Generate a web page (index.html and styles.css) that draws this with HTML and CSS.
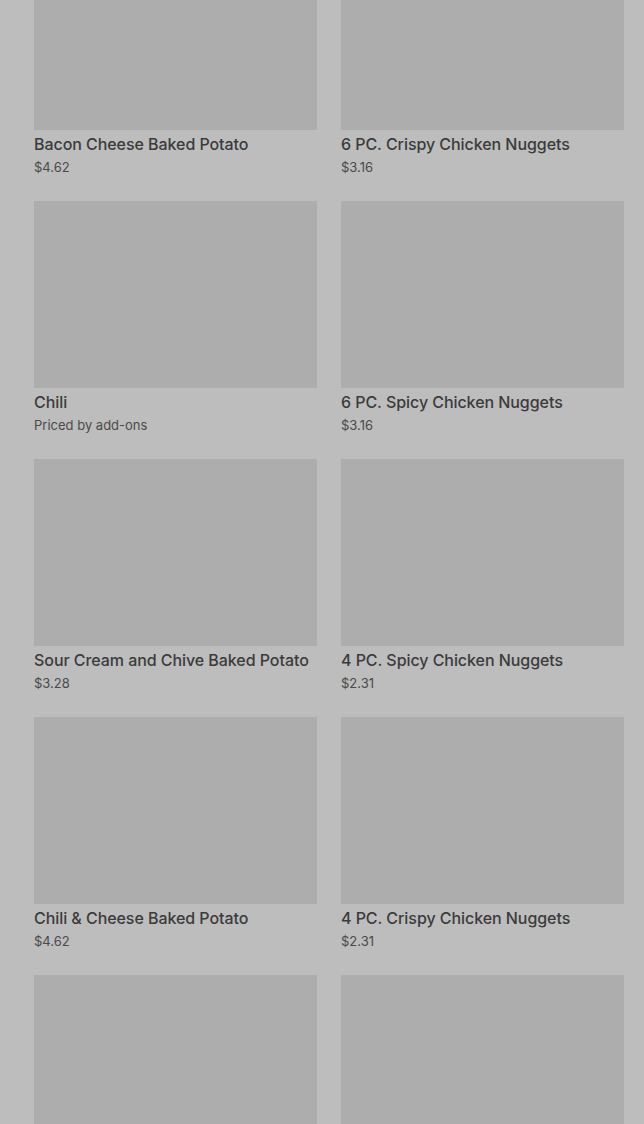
FILE: index.html
```html
<!DOCTYPE html>
<html lang="en">
<head>
  <meta charset="UTF-8">
  <meta name="viewport" content="width=device-width, initial-scale=1.0">
  <title>Menu</title>
  <link rel="stylesheet" href="styles.css">
</head>
<body>
  <div class="menu-grid">
    <div class="item">
      <div class="item-img"></div>
      <div class="item-name">Bacon Cheese Baked Potato</div>
      <div class="item-price">$4.62</div>
    </div>
    <div class="item">
      <div class="item-img"></div>
      <div class="item-name">6 PC. Crispy Chicken Nuggets</div>
      <div class="item-price">$3.16</div>
    </div>
    <div class="item">
      <div class="item-img"></div>
      <div class="item-name">Chili</div>
      <div class="item-price">Priced by add-ons</div>
    </div>
    <div class="item">
      <div class="item-img"></div>
      <div class="item-name">6 PC. Spicy Chicken Nuggets</div>
      <div class="item-price">$3.16</div>
    </div>
    <div class="item">
      <div class="item-img"></div>
      <div class="item-name">Sour Cream and Chive Baked Potato</div>
      <div class="item-price">$3.28</div>
    </div>
    <div class="item">
      <div class="item-img"></div>
      <div class="item-name">4 PC. Spicy Chicken Nuggets</div>
      <div class="item-price">$2.31</div>
    </div>
    <div class="item">
      <div class="item-img"></div>
      <div class="item-name">Chili &amp; Cheese Baked Potato</div>
      <div class="item-price">$4.62</div>
    </div>
    <div class="item">
      <div class="item-img"></div>
      <div class="item-name">4 PC. Crispy Chicken Nuggets</div>
      <div class="item-price">$2.31</div>
    </div>
    <div class="item">
      <div class="item-img"></div>
    </div>
    <div class="item">
      <div class="item-img"></div>
    </div>
  </div>
</body>
</html>
```

FILE: styles.css
```css
body {
  margin: 0;
  background: #bdbdbd;
  font-family: Inter, "Noto Sans", sans-serif;
  color: #3b3b3b;
  overflow: hidden;
}
.menu-grid {
  display: grid;
  grid-template-columns: 283px 283px;
  column-gap: 24px;
  row-gap: 25px;
  margin-top: -57px;
  padding-left: 34px;
}
.item-img {
  height: 187px;
  background: #adadad;
}
.item-name {
  margin-top: 4px;
  font-size: 16px;
  font-weight: 500;
  line-height: 20px;
  letter-spacing: -0.06px;
  white-space: nowrap;
}
.item-price {
  margin-top: 4px;
  font-size: 13px;
  line-height: 18px;
  color: #4a4a4a;
}
```
